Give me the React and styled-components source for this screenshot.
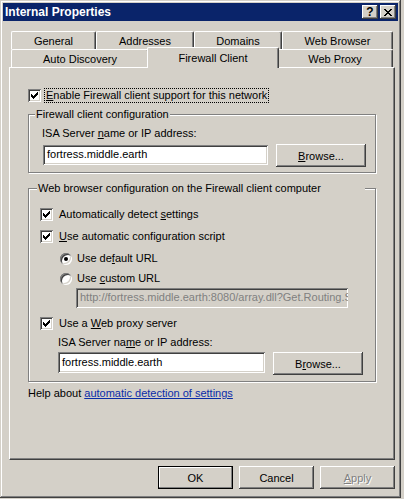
import styled, { createGlobalStyle, css } from "styled-components";

const GlobalStyle = createGlobalStyle`
  html, body {
    margin: 0;
    padding: 0;
    background: #d4d0c8;
  }
  body {
    font-family: "Liberation Sans", Arial, sans-serif;
    font-size: 11px;
    color: #000;
  }
`;

const raised = css`
  box-shadow: inset -1px -1px #404040, inset 1px 1px #ffffff,
    inset -2px -2px #808080, inset 2px 2px #d4d0c8;
`;

const sunken = css`
  box-shadow: inset 1px 1px #808080, inset -1px -1px #ffffff,
    inset 2px 2px #404040, inset -2px -2px #d4d0c8;
`;

const Window = styled.div`
  width: 401px;
  height: 498px;
  box-sizing: border-box;
  padding: 3px;
  background: #d4d0c8;
  box-shadow: inset -1px -1px #404040, inset 1px 1px #d4d0c8,
    inset -2px -2px #808080, inset 2px 2px #ffffff;
  display: flex;
  flex-direction: column;
`;

const TitleBar = styled.div`
  height: 18px;
  background: #0a246a;
  display: flex;
  align-items: center;
  padding: 0 2px;
`;

const Title = styled.div`
  flex: 1;
  color: #fff;
  font-weight: bold;
  font-size: 12px;
  line-height: 18px;
`;

const CaptionButton = styled.div`
  width: 16px;
  height: 14px;
  box-sizing: border-box;
  background: #d4d0c8;
  ${raised};
  display: flex;
  align-items: center;
  justify-content: center;
  margin-left: ${(p) => p.$gap || 0}px;
  font-weight: bold;
  font-size: 12px;
  line-height: 14px;
`;

const TabArea = styled.div`
  margin: 10px 0 0 6px;
  width: 386px;
`;

const TabRow = styled.div`
  display: flex;
  align-items: flex-end;
  height: 18px;
  margin-left: 2px;
  width: 382px;
`;

const Tab = styled.div`
  width: ${(p) => p.$w}px;
  height: 18px;
  box-sizing: border-box;
  background: #d4d0c8;
  border-top: 1px solid #ffffff;
  border-left: 1px solid #ffffff;
  border-right: 1px solid #404040;
  border-top-left-radius: 2px;
  border-top-right-radius: 2px;
  box-shadow: inset -1px 0 #808080;
  display: flex;
  align-items: center;
  justify-content: center;
  padding-top: 1px;
  white-space: nowrap;
  ${(p) =>
    p.$active &&
    css`
      position: relative;
      z-index: 1;
      width: ${p.$w + 4}px;
      height: 21px;
      margin: 0 -2px -1px -2px;
      padding-top: 0;
    `}
`;

const Panel = styled.div`
  height: 393px;
  box-sizing: border-box;
  border-top: 1px solid #ffffff;
  border-left: 1px solid #ffffff;
  border-right: 1px solid #404040;
  border-bottom: 1px solid #404040;
  box-shadow: inset -1px -1px #808080;
  padding: 21px 0 0 18px;
`;

const Option = styled.div`
  display: flex;
  align-items: center;
  height: 13px;
  margin-top: ${(p) => p.$top || 0}px;
  margin-left: ${(p) => p.$indent || 0}px;
  white-space: nowrap;
`;

const Box = styled.div`
  width: 13px;
  height: 13px;
  flex: none;
  box-sizing: border-box;
  background: #fff;
  ${sunken};
  display: flex;
`;

const Radio = styled.div`
  width: 12px;
  height: 12px;
  flex: none;
  border-radius: 50%;
  background: #fff;
  ${sunken};
  display: flex;
  align-items: center;
  justify-content: center;
  &::after {
    content: "";
    display: ${(p) => (p.$on ? "block" : "none")};
    width: 4px;
    height: 4px;
    border-radius: 50%;
    background: #000;
  }
`;

const OptionText = styled.span`
  margin-left: ${(p) => p.$gap || 4}px;
  padding: 0 1px;
  line-height: 13px;
  border: 1px ${(p) => (p.$focus ? "dotted #000" : "solid transparent")};
`;

const Group = styled.div`
  margin-top: ${(p) => p.$top}px;
  width: 348px;
  box-sizing: border-box;
  border: 1px solid #808080;
  box-shadow: inset 1px 1px #ffffff, 1px 1px #ffffff;
  padding: 0 0 ${(p) => p.$bottom}px 0;
`;

const Legend = styled.div`
  margin: -7px 0 0 ${(p) => p.$left}px;
  width: ${(p) => (p.$w ? `${p.$w}px` : "fit-content")};
  height: 13px;
  line-height: 13px;
  padding: 0 1px;
  background: #d4d0c8;
  box-sizing: border-box;
  white-space: nowrap;
`;

const Label = styled.div`
  margin-top: ${(p) => p.$top}px;
  margin-left: ${(p) => p.$indent || 0}px;
  line-height: 13px;
  height: 13px;
`;

const FieldRow = styled.div`
  display: flex;
  align-items: flex-start;
  margin-top: ${(p) => p.$top}px;
  margin-left: ${(p) => p.$indent || 0}px;
`;

const Field = styled.div`
  width: ${(p) => p.$w}px;
  height: ${(p) => p.$h || 21}px;
  margin-top: ${(p) => p.$offset || 0}px;
  box-sizing: border-box;
  background: ${(p) => (p.$disabled ? "#d4d0c8" : "#fff")};
  color: ${(p) => (p.$disabled ? "#808080" : "#000")};
  ${sunken};
  padding: 0 3px 0 4px;
  line-height: ${(p) => (p.$h || 21) - 1}px;
  white-space: nowrap;
  overflow: hidden;
`;

const Button = styled.div`
  width: ${(p) => p.$w || 75}px;
  height: 23px;
  box-sizing: border-box;
  margin-left: ${(p) => p.$gap || 0}px;
  background: #d4d0c8;
  display: flex;
  align-items: center;
  justify-content: center;
  ${raised};
  ${(p) =>
    p.$default &&
    css`
      border: 1px solid #000;
      box-shadow: inset -1px -1px #808080, inset 1px 1px #ffffff;
    `}
  ${(p) =>
    p.$disabled &&
    css`
      color: #808080;
      text-shadow: 1px 1px #ffffff;
    `}
`;

const Help = styled.div`
  margin-top: 5px;
  line-height: 13px;
`;

const Link = styled.a`
  color: #0a2ca8;
  text-decoration: underline;
  cursor: pointer;
`;

const ButtonRow = styled.div`
  margin: 6px 0 0 6px;
  width: 386px;
  display: flex;
  justify-content: flex-end;
  gap: 6px;
`;

function Check() {
  return (
    <svg width="13" height="13" viewBox="0 0 13 13" shapeRendering="crispEdges">
      <path
        fill="#000"
        d="M9 3h1v1h-1z M8 4h2v1h-2z M3 5h1v1h-1z M7 5h3v1h-3z M3 6h2v1h-2z M6 6h3v1h-3z M3 7h5v1h-5z M4 8h3v1h-3z M5 9h1v1h-1z"
      />
    </svg>
  );
}

function CloseGlyph() {
  return (
    <svg width="8" height="7" viewBox="0 0 8 7" shapeRendering="crispEdges">
      <path
        fill="#000"
        d="M0 0h2v1h-2z M6 0h2v1h-2z M1 1h2v1h-2z M5 1h2v1h-2z M2 2h4v1h-4z M3 3h2v1h-2z M2 4h4v1h-4z M1 5h2v1h-2z M5 5h2v1h-2z M0 6h2v1h-2z M6 6h2v1h-2z"
      />
    </svg>
  );
}

const backTabs = [
  { label: "General", w: 85 },
  { label: "Addresses", w: 98 },
  { label: "Domains", w: 88 },
  { label: "Web Browser", w: 111 },
];

const frontTabs = [
  { label: "Auto Discovery", w: 138 },
  { label: "Firewall Client", w: 128, active: true },
  { label: "Web Proxy", w: 116 },
];

export default function App() {
  return (
    <>
      <GlobalStyle />
      <Window>
        <TitleBar>
          <Title>Internal Properties</Title>
          <CaptionButton>?</CaptionButton>
          <CaptionButton $gap={2}>
            <CloseGlyph />
          </CaptionButton>
        </TitleBar>

        <TabArea>
          <TabRow>
            {backTabs.map((t) => (
              <Tab key={t.label} $w={t.w}>
                {t.label}
              </Tab>
            ))}
          </TabRow>
          <TabRow>
            {frontTabs.map((t) => (
              <Tab key={t.label} $w={t.w} $active={t.active}>
                {t.label}
              </Tab>
            ))}
          </TabRow>

          <Panel>
            <Option>
              <Box>
                <Check />
              </Box>
              <OptionText $gap={3} $focus>
                <u>E</u>nable Firewall client support for this network
              </OptionText>
            </Option>

            <Group $top={12} $bottom={5}>
              <Legend $left={6}>Firewall client configuration</Legend>
              <Label $top={6} $indent={13}>
                ISA Server <u>n</u>ame or IP address:
              </Label>
              <FieldRow $top={4} $indent={14}>
                <Field $w={225} $h={20} $offset={1}>
                  fortress.middle.earth
                </Field>
                <Button $w={90} $gap={8}>
                  <span>
                    <u>B</u>rowse...
                  </span>
                </Button>
              </FieldRow>
            </Group>

            <Group $top={15} $bottom={6}>
              <Legend $left={8} $w={328}>
                Web browser configuration on the Firewall client computer
              </Legend>
              <Option $top={13} $indent={11}>
                <Box>
                  <Check />
                </Box>
                <OptionText>
                  Automatically detect <u>s</u>ettings
                </OptionText>
              </Option>
              <Option $top={9} $indent={11}>
                <Box>
                  <Check />
                </Box>
                <OptionText>
                  <u>U</u>se automatic configuration script
                </OptionText>
              </Option>
              <Option $top={9} $indent={31}>
                <Radio $on />
                <OptionText $gap={3}>
                  Use de<u>f</u>ault URL
                </OptionText>
              </Option>
              <Option $top={7} $indent={31}>
                <Radio />
                <OptionText $gap={3}>
                  Use <u>c</u>ustom URL
                </OptionText>
              </Option>
              <FieldRow $top={3} $indent={47}>
                <Field $w={272} $h={20} $disabled>
                  http://fortress.middle.earth:8080/array.dll?Get.Routing.Script
                </Field>
              </FieldRow>
              <Option $top={9} $indent={11}>
                <Box>
                  <Check />
                </Box>
                <OptionText>
                  Use a <u>W</u>eb proxy server
                </OptionText>
              </Option>
              <Label $top={6} $indent={29}>
                ISA Server na<u>m</u>e or IP address:
              </Label>
              <FieldRow $top={3} $indent={29}>
                <Field $w={207} $h={21}>
                  fortress.middle.earth
                </Field>
                <Button $w={90} $gap={8}>
                  <span>
                    B<u>r</u>owse...
                  </span>
                </Button>
              </FieldRow>
            </Group>

            <Help>
              Help about <Link>automatic detection of settings</Link>
            </Help>
          </Panel>
        </TabArea>

        <ButtonRow>
          <Button $default>OK</Button>
          <Button>Cancel</Button>
          <Button $disabled>
            <span>
              <u>A</u>pply
            </span>
          </Button>
        </ButtonRow>
      </Window>
    </>
  );
}
